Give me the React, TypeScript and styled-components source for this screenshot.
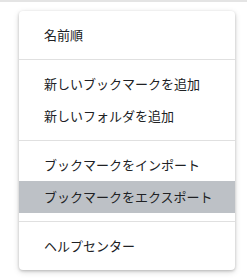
import React, { FC } from "react";
import styled, { createGlobalStyle } from "styled-components";

const GlobalStyle = createGlobalStyle`
  html, body {
    margin: 0;
    padding: 0;
    background: #ffffff;
  }
`;

type Item = { label: string; active?: boolean };

const groups: Item[][] = [
  [{ label: "名前順" }],
  [{ label: "新しいブックマークを追加" }, { label: "新しいフォルダを追加" }],
  [
    { label: "ブックマークをインポート" },
    { label: "ブックマークをエクスポート", active: true },
  ],
  [{ label: "ヘルプセンター" }],
];

const App: FC = () => {
  return (
    <>
      <GlobalStyle />
      <Page>
        <Menu role="menu">
          {groups.map((group, gi) => (
            <React.Fragment key={gi}>
              {gi > 0 && <Separator />}
              {group.map((item) => (
                <MenuItem key={item.label} role="menuitem" $active={item.active}>
                  {item.label}
                </MenuItem>
              ))}
            </React.Fragment>
          ))}
        </Menu>
      </Page>
    </>
  );
};

const Page = styled.div`
  width: 247px;
  height: 279px;
  box-sizing: border-box;
  border-top: 2px solid #e4e4e4;
  padding: 9px 0 0 19px;
  font-family: "Noto Sans CJK JP", "Noto Sans", sans-serif;
`;

const Menu = styled.div`
  width: 216px;
  box-sizing: border-box;
  padding: 8px 0;
  background: #ffffff;
  border-radius: 4px;
  box-shadow: 0 1px 3px rgba(0, 0, 0, 0.2), 0 2px 6px rgba(0, 0, 0, 0.15);
  display: flex;
  flex-direction: column;
`;

const MenuItem = styled.div<{ $active?: boolean }>`
  height: 32px;
  box-sizing: border-box;
  display: flex;
  align-items: center;
  padding: 0 0 1px 25px;
  font-size: 13px;
  line-height: 1;
  color: #202124;
  white-space: nowrap;
  background: ${(p) => (p.$active ? "#bdc1c6" : "transparent")};
`;

const Separator = styled.div`
  height: 1px;
  margin: 8px 0;
  background: #e0e0e0;
`;

export default App;
